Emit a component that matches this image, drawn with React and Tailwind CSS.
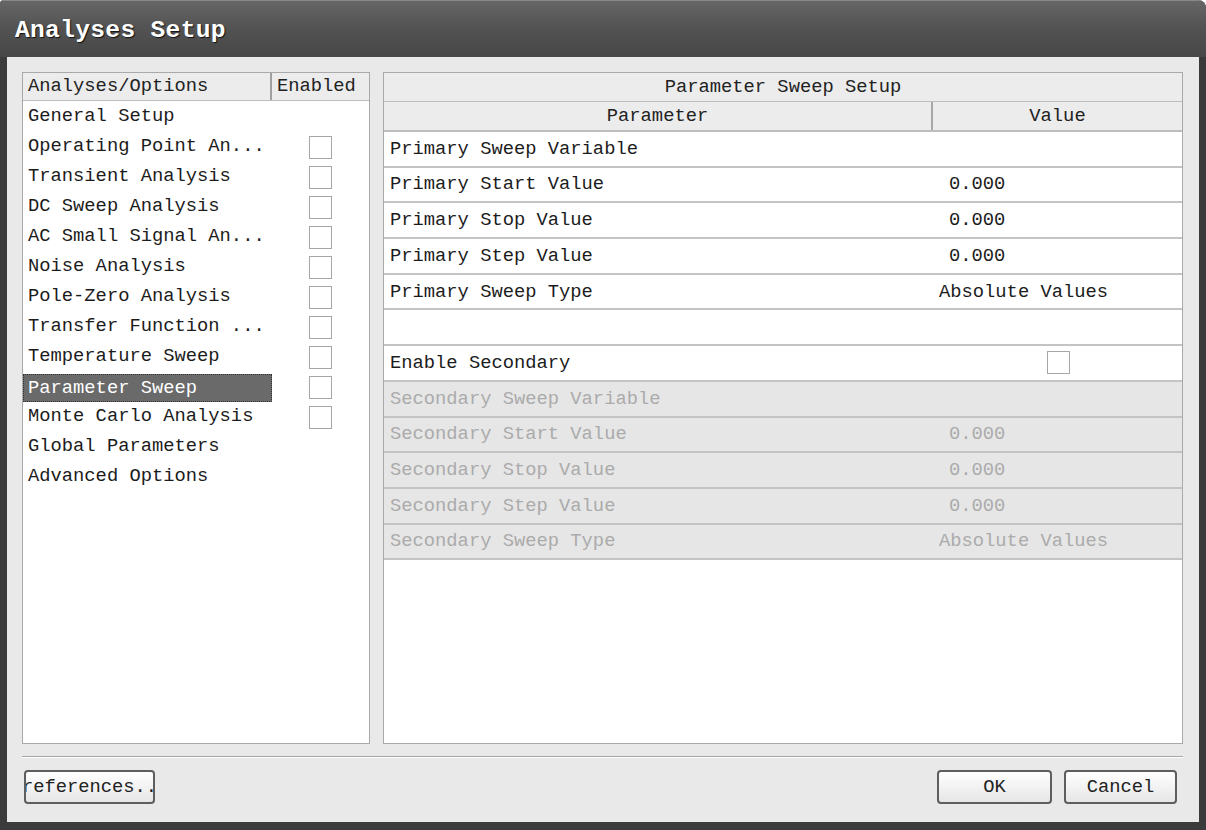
import { useState } from "react";

const mono = { fontFamily: '"Liberation Mono", "DejaVu Sans Mono", monospace' };

const analyses = [
  { name: "General Setup", box: false },
  { name: "Operating Point An...", box: true },
  { name: "Transient Analysis", box: true },
  { name: "DC Sweep Analysis", box: true },
  { name: "AC Small Signal An...", box: true },
  { name: "Noise Analysis", box: true },
  { name: "Pole-Zero Analysis", box: true },
  { name: "Transfer Function ...", box: true },
  { name: "Temperature Sweep", box: true },
  { name: "Parameter Sweep", box: true },
  { name: "Monte Carlo Analysis", box: true },
  { name: "Global Parameters", box: false },
  { name: "Advanced Options", box: false },
];

const rows = [
  { label: "Primary Sweep Variable", value: "" },
  { label: "Primary Start Value", value: "0.000", pad: "pl-[15px]" },
  { label: "Primary Stop Value", value: "0.000", pad: "pl-[15px]" },
  { label: "Primary Step Value", value: "0.000", pad: "pl-[15px]" },
  { label: "Primary Sweep Type", value: "Absolute Values", pad: "pl-[5px]" },
  { label: "", value: "" },
  { label: "Enable Secondary", check: true },
  { label: "Secondary Sweep Variable", value: "", off: true },
  { label: "Secondary Start Value", value: "0.000", pad: "pl-[15px]", off: true },
  { label: "Secondary Stop Value", value: "0.000", pad: "pl-[15px]", off: true },
  { label: "Secondary Step Value", value: "0.000", pad: "pl-[15px]", off: true },
  { label: "Secondary Sweep Type", value: "Absolute Values", pad: "pl-[5px]", off: true },
];

const Box = () => (
  <span className="block w-[23px] h-[23px] border border-[#a6a6a6] bg-white" />
);

const Button = ({ children, w }) => (
  <button
    className={`${w} h-[34px] flex items-center justify-center overflow-hidden whitespace-nowrap rounded-[4px] border-2 border-[#5e5e5e] bg-linear-to-b from-white to-[#e6e6e6] text-[18.8px] text-[#222]`}
  >
    {children}
  </button>
);

export default function App() {
  const [selected] = useState("Parameter Sweep");

  return (
    <div
      className="w-[1206px] h-[830px] flex flex-col bg-[#3b3b3b] rounded-tr-[8px] rounded-tl-[4px] overflow-hidden"
      style={mono}
    >
      {/* title bar */}
      <div className="h-[57px] shrink-0 flex items-center pl-[15px] pt-[4px] bg-linear-to-b from-[#666] via-[#525252] to-[#474747] border-t border-[#888]">
        <span className="text-[24.6px] font-bold text-white tracking-[0.3px] [text-shadow:1px_1px_1px_#111]">
          Analyses Setup
        </span>
      </div>

      <div className="flex-1 mx-[7px] mb-[8px] bg-[#e9e9e9] flex flex-col pt-[15px] pl-[15px] pr-[16px]">
        <div className="flex gap-[13px] h-[672px]">
          {/* left list */}
          <div className="w-[348px] flex flex-col border border-[#a9a9a9] bg-white">
            <div className="h-[28px] shrink-0 flex bg-[#ececec] border-b border-[#bdbdbd] text-[18.8px] text-[#222]">
              <div className="w-[249px] flex items-center pl-[5px] border-r-2 border-[#a0a0a0]">
                Analyses/Options
              </div>
              <div className="flex-1 flex items-center pl-[5px]">Enabled</div>
            </div>
            <div className="flex flex-col">
              {analyses.map((a) => (
                <div key={a.name} className="h-[30px] flex items-center text-[18.8px] text-[#1c1c1c]">
                  <div className="w-[251px] h-full flex items-center">
                    {a.name === selected ? (
                      <span className="w-[249px] h-[28px] mt-[4px] flex items-center pl-[4px] bg-[#6a6a6a] text-white border border-dotted border-[#333]">
                        {a.name}
                      </span>
                    ) : (
                      <span className="pl-[5px]">{a.name}</span>
                    )}
                  </div>
                  <div className="flex-1 flex justify-center pr-[2px] pt-[2px]">{a.box && <Box />}</div>
                </div>
              ))}
            </div>
          </div>

          {/* right table */}
          <div className="flex-1 flex flex-col border border-[#a9a9a9] bg-white">
            <div className="h-[29px] shrink-0 flex items-center justify-center bg-[#ececec] border-b border-[#bdbdbd] text-[18.8px] text-[#222]">
              Parameter Sweep Setup
            </div>
            <div className="h-[30px] shrink-0 flex bg-[#ececec] border-b-2 border-[#bdbdbd] text-[18.8px] text-[#222]">
              <div className="w-[549px] flex items-center justify-center border-r-2 border-[#a8a8a8]">Parameter</div>
              <div className="flex-1 flex items-center justify-center">Value</div>
            </div>
            {rows.map((r, i) => (
              <div
                key={i}
                className={`h-[35.7px] shrink-0 flex items-center border-b-2 border-[#c4c4c4] text-[18.8px] ${
                  r.off ? "bg-[#e6e6e6] text-[#ababab]" : "bg-white text-[#1c1c1c]"
                }`}
              >
                <div className="w-[550px] pl-[6px]">{r.label}</div>
                <div className={`flex-1 ${r.pad || ""} ${r.check ? "flex justify-center" : ""}`}>
                  {r.check ? <Box /> : r.value}
                </div>
              </div>
            ))}
          </div>
        </div>

        {/* separator */}
        <div className="mt-[12px] h-[2px] border-t border-[#a6a6a6] border-b border-b-white" />

        {/* buttons */}
        <div className="flex items-center mt-[12px] pl-[2px] pr-[6px]">
          <Button w="w-[131px]">Preferences...</Button>
          <div className="flex-1" />
          <Button w="w-[115px]">OK</Button>
          <div className="w-[12px]" />
          <Button w="w-[113px]">Cancel</Button>
        </div>
      </div>
    </div>
  );
}
